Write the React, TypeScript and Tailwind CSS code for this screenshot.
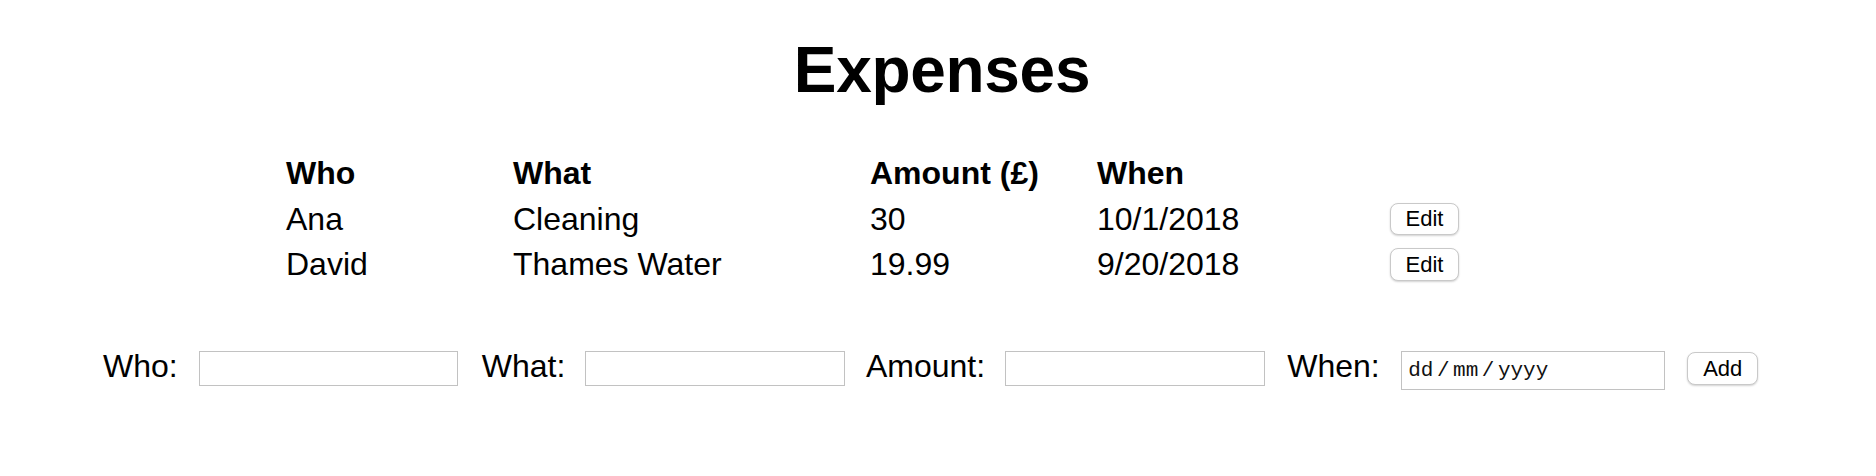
import { useState } from 'react';

type Expense = {
  who: string;
  what: string;
  amount: string;
  when: string;
};

const expenses: Expense[] = [
  { who: 'Ana', what: 'Cleaning', amount: '30', when: '10/1/2018' },
  { who: 'David', what: 'Thames Water', amount: '19.99', when: '9/20/2018' },
];

const cols = 'grid grid-cols-[227px_357px_227px_293px_80px] h-[45.3px] leading-[37px]';

const SmallButton = ({ label, className }: { label: string; className: string }) => (
  <button
    className={`flex items-center justify-center rounded-[8px] border border-[#c9c9c9] bg-white text-[22px] leading-none text-black shadow-[0_1px_2px_rgba(0,0,0,0.18)] ${className}`}
  >
    {label}
  </button>
);

export default function App() {
  const [form, setForm] = useState({ who: '', what: '', amount: '' });

  return (
    <div className="min-h-[476px] bg-white text-black font-['Liberation_Sans',Helvetica,Arial,sans-serif]">
      <h1 className="pt-[33px] pl-[8px] text-center text-[64px] font-bold leading-[74px] tracking-[-0.3px]">Expenses</h1>

      {/* Table */}
      <div className="mt-[48.4px] pl-[286px] text-[32px]">
        <div className={`${cols} font-bold`}>
          <div>Who</div>
          <div>What</div>
          <div>Amount (£)</div>
          <div>When</div>
          <div />
        </div>
        {expenses.map((e) => (
          <div key={e.who} className={cols}>
            <div>{e.who}</div>
            <div>{e.what}</div>
            <div>{e.amount}</div>
            <div>{e.when}</div>
            <div className="pt-[2.5px]">
              <SmallButton label="Edit" className="h-[32.3px] w-[69px]" />
            </div>
          </div>
        ))}
      </div>

      {/* Add form */}
      <div className="mt-[56.5px] flex items-start pl-[103px] text-[32px] leading-[37px]">
        <label className="w-[96.3px]">Who:</label>
        <input
          value={form.who}
          onChange={(ev) => setForm({ ...form, who: ev.target.value })}
          className="mt-[3.3px] h-[35px] w-[259px] border border-[#c2c2c2] bg-white outline-none"
        />
        <label className="ml-[23.4px] w-[103.6px]">What:</label>
        <input
          value={form.what}
          onChange={(ev) => setForm({ ...form, what: ev.target.value })}
          className="mt-[3.3px] h-[35px] w-[259.4px] border border-[#c2c2c2] bg-white outline-none"
        />
        <label className="ml-[21.3px] w-[139.3px]">Amount:</label>
        <input
          value={form.amount}
          onChange={(ev) => setForm({ ...form, amount: ev.target.value })}
          className="mt-[3.3px] h-[35px] w-[259.4px] border border-[#c2c2c2] bg-white outline-none"
        />
        <label className="ml-[22.6px] w-[114px]">When:</label>
        <div className="mt-[3.3px] flex h-[39.4px] w-[263.4px] items-center border border-[#c2c2c2] bg-white pl-[6px] font-['Liberation_Mono','Courier_New',monospace] text-[21px] leading-none text-[#111]">
          <span>dd</span>
          <span className="mx-[3.5px]">/</span>
          <span>mm</span>
          <span className="mx-[3.5px]">/</span>
          <span>yyyy</span>
        </div>
        <div className="ml-[22.6px] pt-[4.7px]">
          <SmallButton label="Add" className="h-[32.3px] w-[71px]" />
        </div>
      </div>
    </div>
  );
}
